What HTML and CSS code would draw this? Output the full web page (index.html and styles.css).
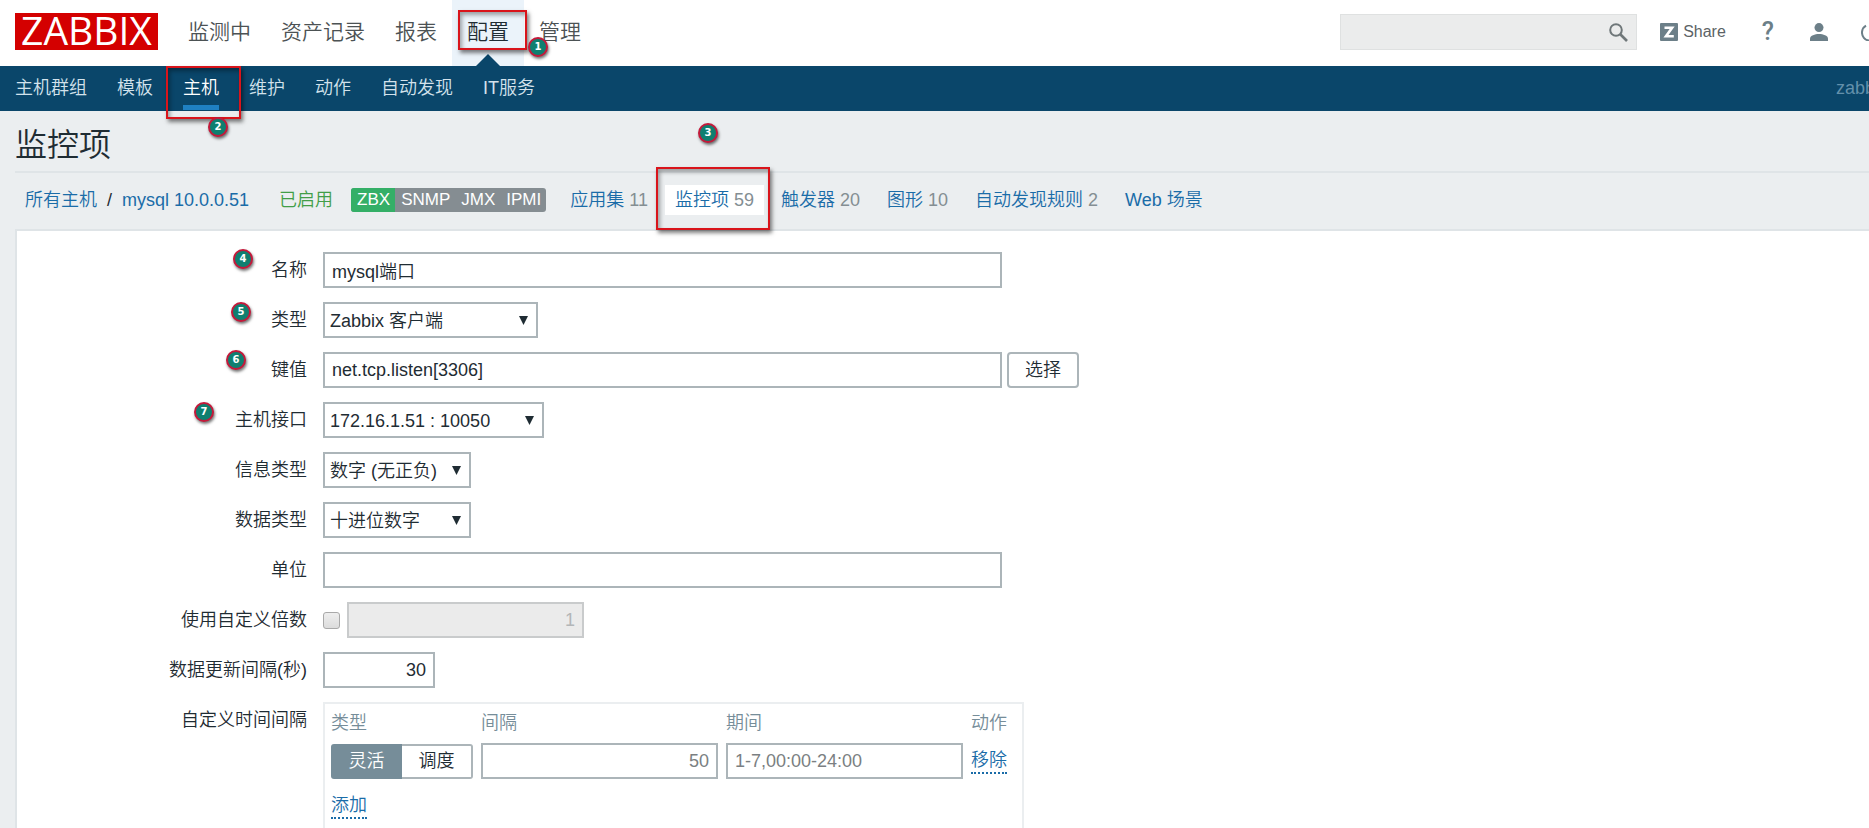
FILE: index.html
```html
<!DOCTYPE html>
<html lang="zh-CN">
<head>
<meta charset="utf-8">
<title>监控项</title>
<link rel="stylesheet" href="styles.css">
</head>
<body>
<header class="top">
  <a class="logo" href="#">ZABBIX</a>
  <nav class="main-nav">
    <a href="#">监测中</a>
    <a href="#">资产记录</a>
    <a href="#">报表</a>
    <a class="active" href="#">配置</a>
    <a href="#">管理</a>
  </nav>
  <div class="tools">
    <form class="search">
      <input type="text" aria-label="搜索">
      <button type="button" aria-label="搜索">
        <svg width="19" height="19" viewBox="0 0 19 19"><circle cx="7" cy="7" r="5.800" fill="none" stroke="#6f7779" stroke-width="2"/><path d="M11 11l7 7" stroke="#6f7779" stroke-width="2.600"/></svg>
      </button>
    </form>
    <a class="share" href="#">
      <svg width="18" height="18" viewBox="0 0 18 18"><rect width="18" height="18" rx="1" fill="#6c7f88"/><path d="M4.500 4.800h7.600L6 13.200h7.800" fill="none" stroke="#fff" stroke-width="2.600"/></svg>
      Share</a>
    <a class="help" href="#">?</a>
    <a class="user" href="#" aria-label="用户">
      <svg width="18" height="18" viewBox="0 0 18 18"><circle cx="9" cy="4.600" r="4.500" fill="#6c7f88"/><path d="M0 18v-2.400C0 12.600 5 11 9 11s9 1.600 9 4.600V18z" fill="#6c7f88"/></svg>
    </a>
    <a class="power" href="#" aria-label="退出">
      <svg width="18" height="18" viewBox="0 0 18 18"><path d="M5 2.700a8 8 0 1 0 8 0M9 0v9" fill="none" stroke="#6c7f88" stroke-width="2"/></svg>
    </a>
  </div>
</header>
<nav class="sub-nav">
  <a href="#">主机群组</a>
  <a href="#">模板</a>
  <a class="active" href="#">主机</a>
  <a href="#">维护</a>
  <a href="#">动作</a>
  <a href="#">自动发现</a>
  <a href="#">IT服务</a>
  <span class="server">zabb</span>
</nav>
<main>
  <h1>监控项</h1>
  <div class="object-bar">
    <a href="#">所有主机</a>
    <span class="slash">/</span>
    <a href="#">mysql 10.0.0.51</a>
    <span class="enabled">已启用</span>
    <div class="status"><span class="on">ZBX</span><span>SNMP</span><span>JMX</span><span>IPMI</span></div>
    <nav class="tabs">
      <a href="#">应用集 <span>11</span></a>
      <a class="selected" href="#">监控项 <span>59</span></a>
      <a href="#">触发器 <span>20</span></a>
      <a href="#">图形 <span>10</span></a>
      <a href="#">自动发现规则 <span>2</span></a>
      <a href="#">Web 场景</a>
    </nav>
  </div>
  <form class="panel">
    <div class="row"><label for="name">名称</label><input class="wide" id="name" type="text" value="mysql端口"></div>
    <div class="row"><label for="type">类型</label><span class="select w-type"><select id="type"><option>Zabbix 客户端</option></select></span></div>
    <div class="row"><label for="key">键值</label><input class="wide" id="key" type="text" value="net.tcp.listen[3306]"><button class="pick" type="button">选择</button></div>
    <div class="row"><label for="iface">主机接口</label><span class="select w-iface"><select id="iface"><option>172.16.1.51 : 10050</option></select></span></div>
    <div class="row"><label for="vtype">信息类型</label><span class="select w-short"><select id="vtype"><option>数字 (无正负)</option></select></span></div>
    <div class="row"><label for="dtype">数据类型</label><span class="select w-short"><select id="dtype"><option>十进位数字</option></select></span></div>
    <div class="row"><label for="units">单位</label><input class="wide" id="units" type="text"></div>
    <div class="row"><label for="mult">使用自定义倍数</label><input id="mult" type="checkbox"><input class="medium num" type="text" value="1" aria-label="倍数" disabled></div>
    <div class="row"><label for="delay">数据更新间隔(秒)</label><input class="small num" id="delay" type="text" value="30"></div>
    <div class="row last">
      <span class="label">自定义时间间隔</span>
      <div class="intervals">
        <table>
          <thead><tr><th>类型</th><th>间隔</th><th>期间</th><th>动作</th></tr></thead>
          <tbody><tr>
            <td><div class="segment"><button class="chosen" type="button">灵活</button><button type="button">调度</button></div></td>
            <td><input class="medium num" type="text" placeholder="50" aria-label="间隔"></td>
            <td><input class="medium" type="text" placeholder="1-7,00:00-24:00" aria-label="期间"></td>
            <td><button class="link" type="button">移除</button></td>
          </tr></tbody>
        </table>
        <button class="link" type="button">添加</button>
      </div>
    </div>
  </form>
</main>
<div class="notes">
  <i class="frame f1"></i><i class="frame f2"></i><i class="frame f3"></i>
  <b class="n1">1</b><b class="n2">2</b><b class="n3">3</b><b class="n4">4</b><b class="n5">5</b><b class="n6">6</b><b class="n7">7</b>
</div>
</body>
</html>
```
FILE: styles.css
```css
* { box-sizing: border-box; }

body {
  position: relative;
  display: flex;
  flex-direction: column;
  min-height: 100vh;
  margin: 0;
  overflow: hidden;
  background: #ebeef0;
  color: #1f2c33;
  font: 350 18px/24px "Liberation Sans", "Noto Sans CJK SC", sans-serif;
}

a { color: #1a6ca8; text-decoration: none; }

input, select, button {
  margin: 0;
  color: inherit;
  font: inherit;
}

/* Top bar */
.top {
  display: flex;
  height: 66px;
  padding-left: 15px;
  background: #fff;
}

.logo {
  width: 143px;
  height: 37px;
  margin: 13px 15px 0 0;
  background: #d40000;
  color: #fff;
  font: 400 39px/34px "Open Sans", sans-serif;
  text-align: center;
}

.main-nav { display: flex; }

.main-nav a {
  position: relative;
  padding: 0 15px;
  color: #4c5254;
  font-size: 21px;
  line-height: 64px;
}

.main-nav .active { background: #ebf3fa; color: #1f2c33; }

.main-nav .active::after {
  content: "";
  position: absolute;
  bottom: 0;
  left: calc(50% - 12px);
  border: 12px solid transparent;
  border-top: 0;
  border-bottom-color: #0a466a;
}

.tools {
  display: flex;
  align-items: center;
  height: 62px;
  margin: 1px 0 0 auto;
}

.tools a { color: #6c7f88; }
.tools svg { display: block; }

.search {
  display: flex;
  align-items: center;
  width: 297px;
  height: 36px;
  padding-right: 8px;
  border: 1px solid #dfe1e1;
  background: #ebecec;
}

.search input {
  flex: 1;
  min-width: 0;
  outline: 0;
}

.search button { padding: 0; border: 0; background: none; }

.tools .share {
  display: flex;
  align-items: center;
  gap: 5px;
  margin-left: 23px;
  color: #5c6366;
  font-size: 16px;
}

.tools .help {
  margin-left: 36px;
  font: 500 25px/30px Roboto, sans-serif;
}

.tools .user { margin-left: 36px; }
.tools .power { width: 8px; margin-left: 33px; overflow: hidden; }

/* Second level menu */
.sub-nav {
  display: flex;
  gap: 30px;
  height: 45px;
  padding-left: 15px;
  background: #0a466a;
  line-height: 44px;
}

.sub-nav a { height: 44px; color: #d3e2ec; }

.sub-nav .active {
  border-bottom: 5px solid #1f80c2;
  color: #fff;
}

.server {
  width: 33px;
  margin-left: auto;
  color: #6390ab;
}

/* Page content */
main {
  display: flex;
  flex: 1;
  flex-direction: column;
  padding-left: 15px;
}

h1 {
  margin: 0;
  padding: 14px 0 6px;
  color: #1f2c33;
  font-size: 32px;
  font-weight: 350;
  line-height: 40px;
}

.object-bar {
  display: flex;
  align-items: center;
  height: 58px;
  padding: 0 0 2px 10px;
  border-top: 2px solid #dfe4e7;
  white-space: nowrap;
}

.slash { margin: 0 10px; }
.enabled { margin: 0 18px 0 30px; color: #429e47; }

.status {
  display: flex;
  border-radius: 3px;
  overflow: hidden;
  background: #858d92;
  color: #fff;
  font-size: 17px;
}

.status span { padding: 0 5px 0 6px; }
.status .on { background: #34af67; }

.tabs {
  display: flex;
  gap: 7px;
  margin-left: 14px;
}

.tabs a { padding: 3px 10px; }
.tabs span { color: #848e93; }
.tabs .selected { background: #fff; }

/* Form */
.panel {
  display: flex;
  flex: 1;
  flex-direction: column;
  gap: 14px;
  padding-top: 21px;
  border: 2px solid #dfe4e7;
  border-width: 2px 0 0 2px;
  background: #fff;
}

.row { display: flex; align-items: center; }
.row.last { flex: 1; align-items: stretch; }

.row label, .label {
  width: 290px;
  margin-right: 16px;
  line-height: 36px;
  text-align: right;
}

input[type="text"], .select select {
  height: 36px;
  padding: 0 7px;
  border: 2px solid #acb5b9;
  border-radius: 0;
  background: #fff;
}

input[type="text"]::placeholder { color: #7b7f82; opacity: 1; }

.search input[type="text"] { border: 0; background: none; }

.wide { width: 679px; }
.medium { width: 237px; }
.small { width: 112px; }
.num { text-align: right; }

input[type="text"]:disabled {
  border-color: #c9cbcc;
  background: #ebebeb;
  color: #b3b6b8;
}

input[type="checkbox"] {
  appearance: none;
  width: 17px;
  height: 17px;
  margin-right: 7px;
  border: 1px solid #a9a9a9;
  border-radius: 3px;
  background: linear-gradient(#eee, #dcdcdc);
}

.select { position: relative; }

.select select {
  appearance: none;
  width: 100%;
  padding: 1px 5px 0;
}

.select::after {
  content: "";
  position: absolute;
  top: 14px;
  right: 10px;
  width: 9px;
  height: 9px;
  background: #1f2c33;
  clip-path: polygon(0 0, 100% 0, 50% 100%);
  pointer-events: none;
}

.w-type { width: 215px; }
.w-iface { width: 221px; }
.w-short { width: 148px; }

.pick {
  width: 72px;
  height: 36px;
  margin-left: 5px;
  padding: 0;
  border: 2px solid #acb5b9;
  border-radius: 4px;
  background: #fff;
}

.intervals {
  width: 701px;
  padding: 6px 6px 0;
  border: 2px solid #ebeef0;
  border-bottom: 0;
}

table { border-collapse: collapse; }

th {
  padding: 0 8px 6px 0;
  color: #768d99;
  font-weight: 350;
  line-height: 27px;
  text-align: left;
}

td { padding: 0 8px 0 0; }
th:last-child, td:last-child { padding-right: 0; }

.segment { display: flex; width: 142px; }

.segment button {
  width: 50%;
  height: 35px;
  padding: 0;
  border: 2px solid #acb5b9;
  border-left: 0;
  border-radius: 0 3px 3px 0;
  background: #fff;
}

.segment .chosen {
  border: 0;
  border-radius: 3px 0 0 3px;
  background: #768d99;
  color: #fff;
}

.link {
  padding: 0;
  border: 0;
  border-bottom: 2px dotted #1a6ca8;
  background: none;
  color: #1a6ca8;
}

.intervals > .link { margin-top: 14px; }

/* Step markers drawn over the page */
.notes {
  position: absolute;
  inset: 0;
  pointer-events: none;
}

.frame {
  position: absolute;
  border: 2px solid #d9141b;
  box-shadow: 2px 3px 4px rgba(0, 0, 0, .5), inset 2px 3px 4px rgba(0, 0, 0, .35);
}

.f1 { left: 458px; top: 10px; width: 69px; height: 40px; }
.f2 { left: 166px; top: 66px; width: 75px; height: 53px; }
.f3 { left: 656px; top: 167px; width: 114px; height: 63px; }

.notes b {
  position: absolute;
  width: 20px;
  height: 20px;
  border: 2px solid #c4193a;
  border-radius: 50%;
  background: #0f7f70;
  box-shadow: 1px 2px 3px rgba(0, 0, 0, .55);
  color: #fff;
  font: 700 10px/15px "DejaVu Sans", sans-serif;
  text-align: center;
}

.n1 { left: 528px; top: 37px; }
.n2 { left: 208px; top: 117px; }
.n3 { left: 698px; top: 123px; }
.n4 { left: 233px; top: 249px; }
.n5 { left: 231px; top: 302px; }
.n6 { left: 226px; top: 350px; }
.n7 { left: 194px; top: 402px; }
```
